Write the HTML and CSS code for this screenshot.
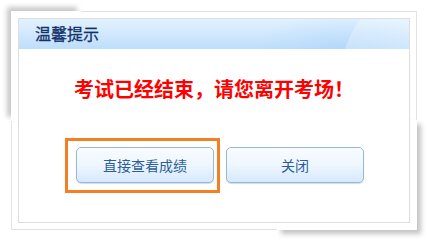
FILE: index.html
```html
<!DOCTYPE html>
<html lang="zh-CN">
<head>
<meta charset="utf-8">
<title>温馨提示</title>
<link rel="stylesheet" href="styles.css">
</head>
<body>
<div class="page">
  <div class="dialog">
    <div class="panel">
      <div class="panel-head">温馨提示</div>
      <p class="message">考试已经结束，请您离开考场！</p>
      <div class="actions">
        <span class="btn-wrap">
          <button class="btn">直接查看成绩</button>
          <span class="highlight"></span>
        </span>
        <button class="btn">关闭</button>
      </div>
    </div>
  </div>
</div>
</body>
</html>
```

FILE: styles.css
```css
html, body {
  margin: 0;
  padding: 0;
  background: #ffffff;
}

body {
  font-family: "Noto Sans CJK SC", "Noto Sans", sans-serif;
  width: 427px;
  height: 240px;
  overflow: hidden;
}

.page {
  padding: 11px 0 0 11px;
}

.dialog {
  position: relative;
  width: 406px;
  height: 219px;
  box-sizing: border-box;
  border: 1px solid #e3e3e3;
  background: #ffffff;
  padding: 6px;
  z-index: 0;
}

.dialog::before {
  content: "";
  position: absolute;
  left: -1px;
  top: -1px;
  width: 70px;
  height: 110px;
  background: #fff;
  box-shadow: -4px -4px 5px rgba(0, 0, 0, 0.22);
  z-index: -1;
}

.dialog::after {
  content: "";
  position: absolute;
  right: -1px;
  bottom: -1px;
  width: 140px;
  height: 110px;
  background: #fff;
  box-shadow: 4px 4px 5px rgba(0, 0, 0, 0.24);
  z-index: -1;
}

.panel {
  height: 205px;
  box-sizing: border-box;
  border: 1px solid #dedede;
  background: #ffffff;
}

.panel-head {
  height: 30px;
  box-sizing: border-box;
  padding: 0 0 3px 16px;
  display: flex;
  align-items: center;
  font-size: 16px;
  color: #12316a;
  -webkit-text-stroke: 0.3px #12316a;
  background:
    radial-gradient(circle 102px at 423px 60px, rgba(255, 255, 255, 0.28) 0, rgba(255, 255, 255, 0.28) 99%, rgba(255, 255, 255, 0) 100%),
    radial-gradient(ellipse 90px 40px at 330px 30px, rgba(160, 205, 250, 0.35), rgba(160, 205, 250, 0)),
    linear-gradient(to bottom, #e1f2fe 0%, #cfe7fd 55%, #bddefb 100%);
}

.message {
  margin: 28px 0 0 0;
  height: 24px;
  line-height: 24px;
  text-align: center;
  font-size: 20px;
  font-weight: bold;
  color: #ff0000;
}

.actions {
  margin-top: 46px;
  padding-left: 57px;
  display: flex;
  gap: 12px;
}

.btn-wrap {
  position: relative;
  display: block;
}

.btn {
  display: block;
  width: 138px;
  height: 36px;
  box-sizing: border-box;
  border: 1px solid #98b8d9;
  border-radius: 5px;
  background: linear-gradient(to bottom, #f9fcff 0%, #eef6fe 50%, #d6e9fc 100%);
  box-shadow: 0 1px 1px rgba(120, 150, 190, 0.35);
  font-family: "Noto Sans CJK SC", "Noto Sans", sans-serif;
  font-size: 14px;
  color: #2c5d9b;
  padding: 0;
  cursor: pointer;
}

.highlight {
  position: absolute;
  top: -9px;
  left: -11px;
  right: -6px;
  bottom: -10px;
  border: 3px solid #f57f22;
  pointer-events: none;
}
```
